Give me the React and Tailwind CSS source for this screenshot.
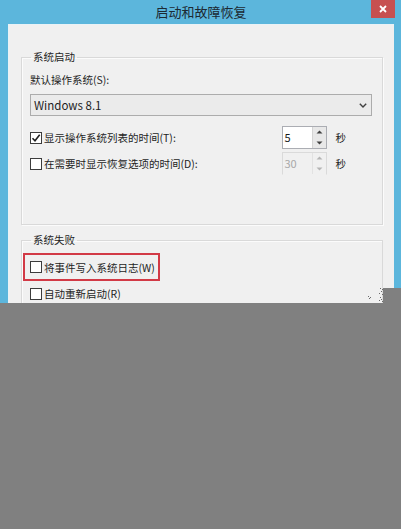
import React from "react";

const CheckBox = ({ checked }) => (
  <span className="flex w-[12px] h-[12px] shrink-0 items-center justify-center border border-[#3c3c3c] bg-white">
    {checked && (
      <svg width="10" height="10" viewBox="0 0 10 10">
        <path d="M1.5 5.2 L4 7.8 L8.7 1.8" fill="none" stroke="#1f1f1f" strokeWidth="1.6" />
      </svg>
    )}
  </span>
);

const Arrow = ({ up, color }) => (
  <svg width="7" height="4" viewBox="0 0 7 4">
    <path d={up ? "M0.5 3.5 L3.5 0.5 L6.5 3.5 Z" : "M0.5 0.5 L3.5 3.5 L6.5 0.5 Z"} fill={color} />
  </svg>
);

const Spinner = ({ value, disabled }) => (
  <div
    className={
      disabled
        ? "flex w-[45px] h-[23px] border border-[#dadada] border-b-[#f0f0f0] bg-[#f0f0f0] text-[#a8a8a8]"
        : "flex w-[45px] h-[23px] border border-[#abadb3] bg-white text-[#1a1a1a]"
    }
  >
    <div className="flex-1 pl-[2px] pt-[3px] text-[11px] leading-[14px]">{value}</div>
    <div
      className={
        disabled
          ? "flex w-[14px] flex-col border-l border-[#e2e2e2] bg-[#f0f0f0]"
          : "flex w-[14px] flex-col border-l border-[#d4d4d4] bg-[#e8e8e8]"
      }
    >
      <div className="flex flex-1 items-center justify-center">
        <Arrow up color={disabled ? "#b4b4b4" : "#404040"} />
      </div>
      <div className="flex flex-1 items-center justify-center">
        <Arrow color={disabled ? "#b4b4b4" : "#404040"} />
      </div>
    </div>
  </div>
);

const App = () => {
  return (
    <div className="relative flex h-[529px] w-[401px] flex-col overflow-hidden bg-[#808080] font-['Noto_Sans_CJK_SC','Noto_Sans',sans-serif] text-[#1e1e1e]">
      <div className="flex h-[303px] shrink-0 flex-col bg-[#5cb6dc] pl-[8px] pr-[7px]">
        <div className="relative flex h-[24px] shrink-0 items-center justify-center">
          <span className="pb-[1px] text-[13px] leading-[16px] text-[#1c2a33]">启动和故障恢复</span>
          <div className="absolute right-[-1px] top-0 flex h-[18px] w-[24px] items-center justify-center bg-[#c75050]">
            <svg width="8" height="8" viewBox="0 0 8 8">
              <path d="M1 1 L7 7 M7 1 L1 7" stroke="#ffffff" strokeWidth="1.8" />
            </svg>
          </div>
        </div>
        <div className="flex flex-1 flex-col overflow-hidden border-l border-t border-[#e9f2f6] bg-[#f0f0f0] pl-[12px] pr-[11px] pt-[25px] text-[10.5px] leading-[15px]">
          <fieldset className="border border-[#d9d9d9] px-[8px] pb-[49px] pr-[10px] pt-[8px] shadow-[inset_1px_1px_0_#fbfbfb,1px_1px_0_#fbfbfb]">
            <legend className="ml-[1px] px-[2px] leading-[14px]">系统启动</legend>
            <div>默认操作系统(S):</div>
            <div className="mt-[7px] flex h-[22px] items-center justify-between border border-[#acacac] bg-[#ebebeb] pl-[3px] pr-[4px]">
              <span className="text-[11.5px]">Windows 8.1</span>
              <svg width="8" height="5" viewBox="0 0 8 5">
                <path d="M0.8 0.8 L4 4 L7.2 0.8" fill="none" stroke="#404040" strokeWidth="1.4" />
              </svg>
            </div>
            <div className="mt-[10px] flex items-center">
              <div className="flex flex-1 items-center gap-[2px]">
                <CheckBox checked />
                <span>显示操作系统列表的时间(T):</span>
              </div>
              <Spinner value="5" />
              <span className="ml-[9px] mr-[26px]">秒</span>
            </div>
            <div className="mt-[3px] flex items-center">
              <div className="flex flex-1 items-center gap-[2px]">
                <CheckBox />
                <span>在需要时显示恢复选项的时间(D):</span>
              </div>
              <Spinner value="30" disabled />
              <span className="ml-[9px] mr-[26px]">秒</span>
            </div>
          </fieldset>
          <fieldset className="mt-[8px] flex-1 border border-b-0 border-[#d9d9d9] px-[8px] pt-[6px] shadow-[inset_1px_1px_0_#fbfbfb]">
            <legend className="ml-[1px] px-[2px] leading-[14px]">系统失败</legend>
            <div className="-ml-[7px] flex h-[28px] w-[137px] items-center gap-[2px] border-2 border-[#d23a46] pl-[5px]">
              <CheckBox />
              <span>将事件写入系统日志(W)</span>
            </div>
            <div className="mt-[5px] flex items-center gap-[2px]">
              <CheckBox />
              <span>自动重新启动(R)</span>
            </div>
          </fieldset>
        </div>
      </div>
      <div className="absolute left-[383px] top-[288px] h-[16px] w-[18px] bg-[#808080]" />
      <svg className="absolute left-[367px] top-[288px]" width="16" height="15" viewBox="0 0 16 15">
        <g fill="#6a6a6a">
          <rect x="13" y="0" width="1" height="1" />
          <rect x="15" y="1" width="1" height="1" />
          <rect x="14" y="3" width="1" height="1" />
          <rect x="12" y="5" width="1" height="1" />
          <rect x="15" y="6" width="1" height="1" />
          <rect x="1" y="8" width="1" height="1" />
          <rect x="3" y="9" width="1" height="1" />
          <rect x="2" y="10" width="1" height="1" />
          <rect x="13" y="9" width="1" height="1" />
          <rect x="14" y="11" width="1" height="1" />
          <rect x="12" y="12" width="1" height="1" />
          <rect x="15" y="13" width="1" height="1" />
        </g>
      </svg>
    </div>
  );
};

export default App;
